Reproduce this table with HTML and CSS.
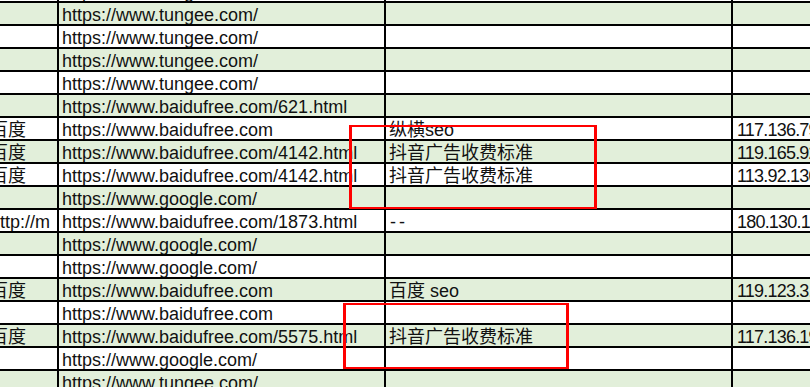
FILE: index.html
```html
<!DOCTYPE html>
<html lang="zh-CN">
<head>
<meta charset="utf-8">
<title>Sheet</title>
<link rel="stylesheet" href="styles.css">
</head>
<body>
<div class="sheet">
  <div class="row w"><div class="c"></div><div class="c">https://www.tungee.com/</div><div class="c"></div><div class="c ip"></div></div>
  <div class="row g"><div class="c"></div><div class="c">https://www.tungee.com/</div><div class="c"></div><div class="c ip"></div></div>
  <div class="row w"><div class="c"></div><div class="c">https://www.tungee.com/</div><div class="c"></div><div class="c ip"></div></div>
  <div class="row g"><div class="c"></div><div class="c">https://www.tungee.com/</div><div class="c"></div><div class="c ip"></div></div>
  <div class="row w"><div class="c"></div><div class="c">https://www.tungee.com/</div><div class="c"></div><div class="c ip"></div></div>
  <div class="row g"><div class="c"></div><div class="c">https://www.baidufree.com/621.html</div><div class="c"></div><div class="c ip"></div></div>
  <div class="row w"><div class="c">百度</div><div class="c">https://www.baidufree.com</div><div class="c">纵横seo</div><div class="c ip">117.136.79.120</div></div>
  <div class="row g"><div class="c">百度</div><div class="c">https://www.baidufree.com/4142.html</div><div class="c">抖音广告收费标准</div><div class="c ip">119.165.92.37</div></div>
  <div class="row w"><div class="c">百度</div><div class="c">https://www.baidufree.com/4142.html</div><div class="c">抖音广告收费标准</div><div class="c ip">113.92.130.54</div></div>
  <div class="row g"><div class="c"></div><div class="c">https://www.google.com/</div><div class="c"></div><div class="c ip"></div></div>
  <div class="row w"><div class="c">http://m</div><div class="c">https://www.baidufree.com/1873.html</div><div class="c dash">--</div><div class="c ip">180.130.10.22</div></div>
  <div class="row g"><div class="c"></div><div class="c">https://www.google.com/</div><div class="c"></div><div class="c ip"></div></div>
  <div class="row w"><div class="c"></div><div class="c">https://www.google.com/</div><div class="c"></div><div class="c ip"></div></div>
  <div class="row g"><div class="c">百度</div><div class="c">https://www.baidufree.com</div><div class="c">百度 seo</div><div class="c ip">119.123.3.18</div></div>
  <div class="row w"><div class="c"></div><div class="c">https://www.baidufree.com</div><div class="c"></div><div class="c ip"></div></div>
  <div class="row g"><div class="c">百度</div><div class="c">https://www.baidufree.com/5575.html</div><div class="c">抖音广告收费标准</div><div class="c ip">117.136.19.6</div></div>
  <div class="row w"><div class="c"></div><div class="c">https://www.google.com/</div><div class="c"></div><div class="c ip"></div></div>
  <div class="row g"><div class="c"></div><div class="c">https://www.tungee.com/</div><div class="c"></div><div class="c ip"></div></div>
</div>
<div class="mark mark-1"></div>
<div class="mark mark-2"></div>
</body>
</html>
```

FILE: styles.css
```css
html, body {
  margin: 0;
  padding: 0;
  background: #ffffff;
  overflow: hidden;
}

body {
  position: relative;
  width: 810px;
  height: 387px;
  font-family: "Liberation Sans", "Noto Sans CJK SC", sans-serif;
  font-size: 18px;
  color: #111111;
}

.sheet {
  display: flex;
  flex-direction: column;
  gap: 2px;
  background: #000000;
  width: 900px;
  margin-top: -20px;
  margin-left: -13px;
}

.row {
  display: grid;
  grid-template-columns: 70px 325px 345px 1fr;
  column-gap: 2px;
  height: 21px;
}

.c {
  height: 21px;
  line-height: 24px;
  padding-left: 3px;
  white-space: nowrap;
  overflow: hidden;
}

.c.ip {
  padding-left: 4px;
  letter-spacing: -0.8px;
}

.c.dash {
  letter-spacing: 3px;
  padding-left: 4px;
}

.w .c {
  background: #ffffff;
}

.g .c {
  background: #e2efda;
}

.mark {
  position: absolute;
  box-sizing: border-box;
  border-style: solid;
  border-color: #ff0000;
  border-width: 2px 3px;
}

.mark-1 {
  left: 349px;
  top: 125px;
  width: 248px;
  height: 84px;
}

.mark-2 {
  left: 343px;
  top: 303px;
  width: 226px;
  height: 66px;
}
```
